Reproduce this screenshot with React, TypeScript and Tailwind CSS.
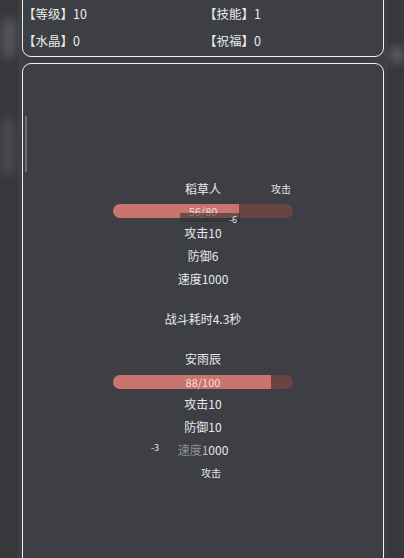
import React from "react";

const STAT_ROW = "flex h-[23px] items-center justify-center text-[12px] text-[#e9e9e9]";

function HpBar({ cur, max, hit }: { cur: number; max: number; hit?: string }) {
  const pct = (cur / max) * 100;
  return (
    <div className="relative mx-auto h-[14px] w-[180px]">
      <div className="h-full w-full overflow-hidden rounded-full bg-[#6a4442]">
        <div className="h-full bg-[#c8756f]" style={{ width: `${pct}%` }} />
      </div>
      <div className="absolute inset-0 flex items-center justify-center text-[11px] leading-none text-[#f3dcd8]">
        {cur}/{max}
      </div>
      {hit && (
        <div className="absolute left-[67px] top-[9px] flex h-[9px] w-[60px] items-start justify-end bg-[#2f3034]/60 pr-[3px]">
          <span className="text-[9px] leading-[13px] text-[#e6e6e6]">{hit}</span>
        </div>
      )}
    </div>
  );
}

export default function App() {
  return (
    <div className="relative flex h-[558px] w-[404px] overflow-hidden bg-[#3a3b3f] font-['Noto_Sans_CJK_SC','Noto_Sans',sans-serif]">
      {/* blurred backdrop on the edges */}
      <div className="relative w-[18px] shrink-0 bg-[#37383c]">
        <div className="absolute left-[2px] top-[18px] h-[40px] w-[14px] rounded-full bg-[#55575b] blur-[5px]" />
        <div className="absolute left-[2px] top-[118px] h-[58px] w-[12px] rounded-full bg-[#4c4e52] blur-[5px]" />
      </div>

      <div className="flex flex-1 flex-col bg-[#3d3f44] px-[4px]">
        {/* stats panel */}
        <div className="-mt-[11px] shrink-0 rounded-[9px] border-[1.5px] border-[#f2f2f2] pb-[1px] pt-[11px] text-[12.5px] text-[#ececec]">
          <div className="grid grid-cols-2">
            <div className="flex h-[27px] items-center">【等级】10</div>
            <div className="flex h-[27px] items-center pl-[1px]">【技能】1</div>
            <div className="flex h-[27px] items-center">【水晶】0</div>
            <div className="flex h-[27px] items-center pl-[1px]">【祝福】0</div>
          </div>
        </div>

        {/* battle panel */}
        <div className="relative mt-[6px] h-[540px] shrink-0 rounded-[9px] border-[1.5px] border-[#f2f2f2] pt-[113px]">
          <div className="absolute left-[1.5px] top-[52px] h-[56px] w-[2.5px] rounded-full bg-[#6c6e72]" />

          <div className="relative flex h-[23px] items-center justify-center text-[12px] text-[#ececec]">
            稻草人
            <span className="absolute left-[248px] text-[10px] text-[#e4e4e4]">攻击</span>
          </div>
          <div className="mt-[4px]">
            <HpBar cur={56} max={80} hit="-6" />
          </div>
          <div className="mt-[3px]">
            <div className={STAT_ROW}>攻击10</div>
            <div className={STAT_ROW}>防御6</div>
            <div className={STAT_ROW}>速度1000</div>
          </div>

          <div className={`${STAT_ROW} mt-[17px]`}>战斗耗时4.3秒</div>

          <div className={`${STAT_ROW} mt-[17px]`}>安雨辰</div>
          <div className="mt-[5px]">
            <HpBar cur={88} max={100} />
          </div>
          <div className="relative mt-[3px]">
            <div className={STAT_ROW}>攻击10</div>
            <div className={STAT_ROW}>防御10</div>
            <div className={STAT_ROW}>
              <span className="text-[#8f9094]">速度</span>
              <span className="text-[#bdbec0]">1</span>
              <span>000</span>
            </div>
            <span className="absolute left-[128px] top-[49px] text-[9px] text-[#e6e6e6]">-3</span>
            <div className="flex h-[23px] items-center justify-center pl-[16px] text-[10px] text-[#e4e4e4]">
              攻击
            </div>
          </div>
        </div>
      </div>

      <div className="relative w-[16px] shrink-0 bg-[#37383c]">
        <div className="absolute left-[2px] top-[46px] h-[18px] w-[14px] rounded-full bg-[#5a5c60] blur-[4px]" />
      </div>
    </div>
  );
}
